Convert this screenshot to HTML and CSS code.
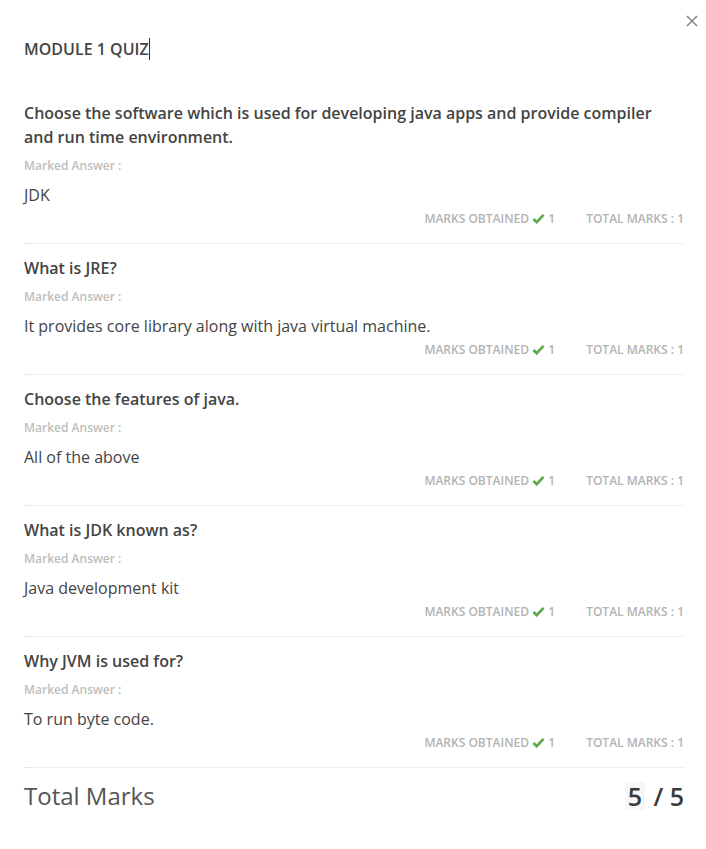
FILE: index.html
```html
<!DOCTYPE html>
<html>
<head>
<meta charset="utf-8">
<link rel="stylesheet" href="styles.css">
</head>
<body>
<div class="modal">
  <button class="close" aria-label="Close">
    <svg width="12" height="12" viewBox="0 0 12 12"><path d="M1 1 L11 11 M11 1 L1 11" stroke="#8a8a8a" stroke-width="1.6" fill="none"/></svg>
  </button>
  <h1 class="title"><span class="caret">MODULE 1 QUIZ</span></h1>
  <div class="list">
    <div class="item">
      <div class="question">Choose the software which is used for developing java apps and provide compiler and run time environment.</div>
      <div class="label">Marked Answer :</div>
      <div class="answer">JDK</div>
      <div class="marks"><span>MARKS OBTAINED <svg class="check" viewBox="0 0 14 12" width="13" height="11"><path d="M1.5 6.5 L5 10 L12.5 2" stroke="#5fa94c" stroke-width="3" fill="none"/></svg> 1</span><span>TOTAL MARKS : 1</span></div>
    </div>
    <div class="item">
      <div class="question">What is JRE?</div>
      <div class="label">Marked Answer :</div>
      <div class="answer">It provides core library along with java virtual machine.</div>
      <div class="marks"><span>MARKS OBTAINED <svg class="check" viewBox="0 0 14 12" width="13" height="11"><path d="M1.5 6.5 L5 10 L12.5 2" stroke="#5fa94c" stroke-width="3" fill="none"/></svg> 1</span><span>TOTAL MARKS : 1</span></div>
    </div>
    <div class="item">
      <div class="question">Choose the features of java.</div>
      <div class="label">Marked Answer :</div>
      <div class="answer">All of the above</div>
      <div class="marks"><span>MARKS OBTAINED <svg class="check" viewBox="0 0 14 12" width="13" height="11"><path d="M1.5 6.5 L5 10 L12.5 2" stroke="#5fa94c" stroke-width="3" fill="none"/></svg> 1</span><span>TOTAL MARKS : 1</span></div>
    </div>
    <div class="item">
      <div class="question">What is JDK known as?</div>
      <div class="label">Marked Answer :</div>
      <div class="answer">Java development kit</div>
      <div class="marks"><span>MARKS OBTAINED <svg class="check" viewBox="0 0 14 12" width="13" height="11"><path d="M1.5 6.5 L5 10 L12.5 2" stroke="#5fa94c" stroke-width="3" fill="none"/></svg> 1</span><span>TOTAL MARKS : 1</span></div>
    </div>
    <div class="item">
      <div class="question">Why JVM is used for?</div>
      <div class="label">Marked Answer :</div>
      <div class="answer">To run byte code.</div>
      <div class="marks"><span>MARKS OBTAINED <svg class="check" viewBox="0 0 14 12" width="13" height="11"><path d="M1.5 6.5 L5 10 L12.5 2" stroke="#5fa94c" stroke-width="3" fill="none"/></svg> 1</span><span>TOTAL MARKS : 1</span></div>
    </div>
  </div>
  <div class="total">
    <span class="total-label">Total Marks</span>
    <span class="total-value"><span class="score">5</span> / 5</span>
  </div>
</div>
</body>
</html>
```
FILE: styles.css
```css
* { box-sizing: border-box; }
html, body { margin: 0; padding: 0; background: #fff; }
body { font-family: "Open Sans", "Liberation Sans", sans-serif; color: #444; }
.modal { position: relative; padding: 38px 22px 0 24px; }
.close {
  position: absolute; top: 15px; right: 8px;
  width: 12px; height: 12px; padding: 0; border: 0; background: none;
  display: flex;
}
.title { margin: 0; font-size: 16px; line-height: 22px; font-weight: 600; color: #444; }
.caret { border-right: 1px solid #333; display: inline-block; line-height: 22px; }
.list { margin-top: 29px; }
.item { padding: 12px 0 15px; border-bottom: 1px dotted #dcdcdc; }
.question { font-size: 16px; line-height: 24px; font-weight: 600; color: #444; }
.label { margin-top: 8px; font-size: 12px; line-height: 18px; font-weight: 600; color: #bdbdbd; }
.answer { margin-top: 9px; font-size: 16px; line-height: 22px; color: #444; }
.marks {
  margin-top: 4px; display: flex; justify-content: flex-end; gap: 31px;
  font-size: 12px; line-height: 18px; font-weight: 600; color: #b3b3b3;
}
.check { vertical-align: -1px; }
.total { display: flex; justify-content: space-between; align-items: center; padding-top: 14px; }
.total-label { font-size: 24px; line-height: 28px; color: #555; }
.total-value { font-size: 25px; line-height: 28px; color: #3a3a3a; font-weight: 600; }
.score { display: inline-block; background: #f7f7f7; padding: 0 3px; margin-right: 2px; }
```
